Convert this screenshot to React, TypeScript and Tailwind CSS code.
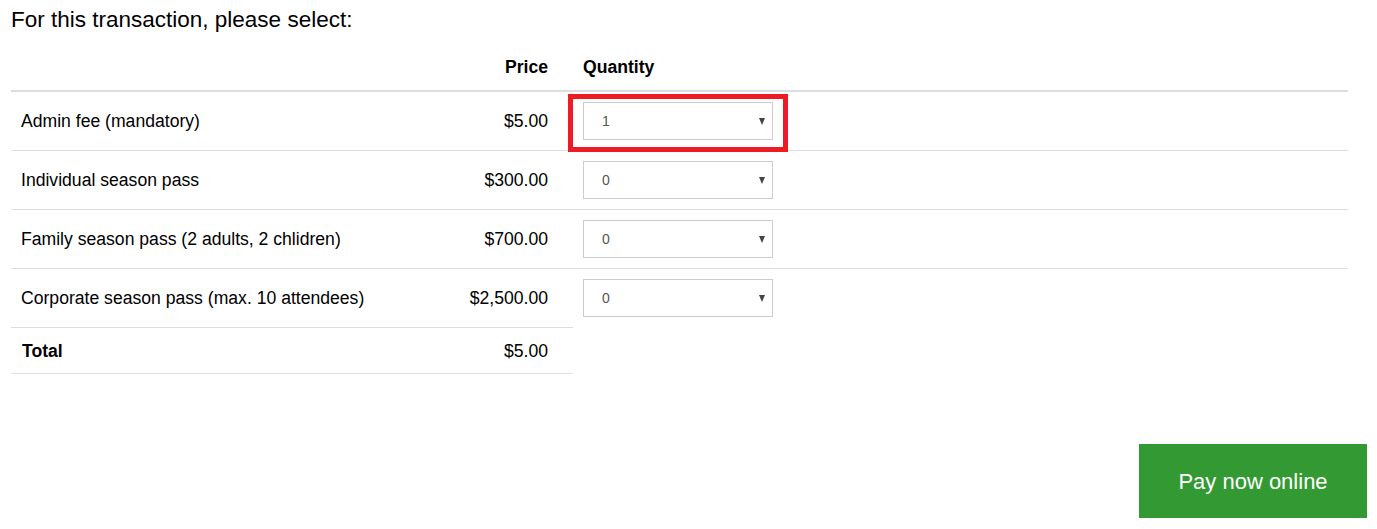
const items = [
  { name: "Admin fee (mandatory)", price: "$5.00", qty: "1", highlight: true },
  { name: "Individual season pass", price: "$300.00", qty: "0" },
  { name: "Family season pass (2 adults, 2 chlidren)", price: "$700.00", qty: "0" },
  { name: "Corporate season pass (max. 10 attendees)", price: "$2,500.00", qty: "0" },
];

function QtySelect({ value, highlight }: { value: string; highlight?: boolean }) {
  return (
    <div className="relative w-[190px] h-[38px]">
      <select
        defaultValue={value}
        className="appearance-none w-full h-full border border-[#cccccc] bg-white pl-[18px] text-[14px] text-[#555555] outline-none"
      >
        {Array.from({ length: 11 }, (_, i) => (
          <option key={i} value={String(i)}>
            {i}
          </option>
        ))}
      </select>
      {/* dropdown arrow */}
      <span className="pointer-events-none absolute right-[8px] top-[16px] w-0 h-0 border-l-[3.5px] border-r-[3.5px] border-t-[7px] border-l-transparent border-r-transparent border-t-[#444444]" />
      {highlight && (
        <div className="pointer-events-none absolute left-[-15px] top-[-8px] w-[220px] h-[58px] border-[5px] border-[#ed1c24] z-10" />
      )}
    </div>
  );
}

export default function App() {
  return (
    <main className="min-h-screen bg-white text-black font-['Liberation_Sans',Arial,sans-serif]">
      {/* Heading */}
      <h1 className="pl-[11px] pt-[7px] text-[22.5px] leading-[25px] font-normal">
        For this transaction, please select:
      </h1>

      {/* Table */}
      <div className="ml-[11px] w-[1337px] text-[17.6px] leading-[20px]">
        {/* Header */}
        <div className="grid grid-cols-[419px_143px_1fr] pt-[25px] pb-[13px] border-b-2 border-[#dddddd] font-bold">
          <div />
          <div className="text-right pr-[25px]">Price</div>
          <div className="pl-[10px]">Quantity</div>
        </div>

        {/* Rows */}
        {items.map((item, i) => (
          <div
            key={item.name}
            className={`grid grid-cols-[419px_143px_1fr] items-center ${
              i === 0 ? "h-[58px]" : "h-[59px] border-t border-[#dddddd]"
            }`}
          >
            <div className="pl-[10px] pb-[1px]">{item.name}</div>
            <div className="text-right pr-[25px] pb-[1px]">{item.price}</div>
            <div className="pl-[10px]">
              <QtySelect value={item.qty} highlight={item.highlight} />
            </div>
          </div>
        ))}

        {/* Total */}
        <div className="grid grid-cols-[419px_143px] w-[562px] h-[47px] items-center border-y border-[#dddddd]">
          <div className="pl-[11px] font-bold">Total</div>
          <div className="text-right pr-[25px]">$5.00</div>
        </div>
      </div>

      {/* Pay button */}
      <div className="flex justify-end pr-[10px] mt-[70px]">
        <button className="w-[228px] h-[74px] bg-[#339933] text-white text-[22px]">
          Pay now online
        </button>
      </div>
    </main>
  );
}
